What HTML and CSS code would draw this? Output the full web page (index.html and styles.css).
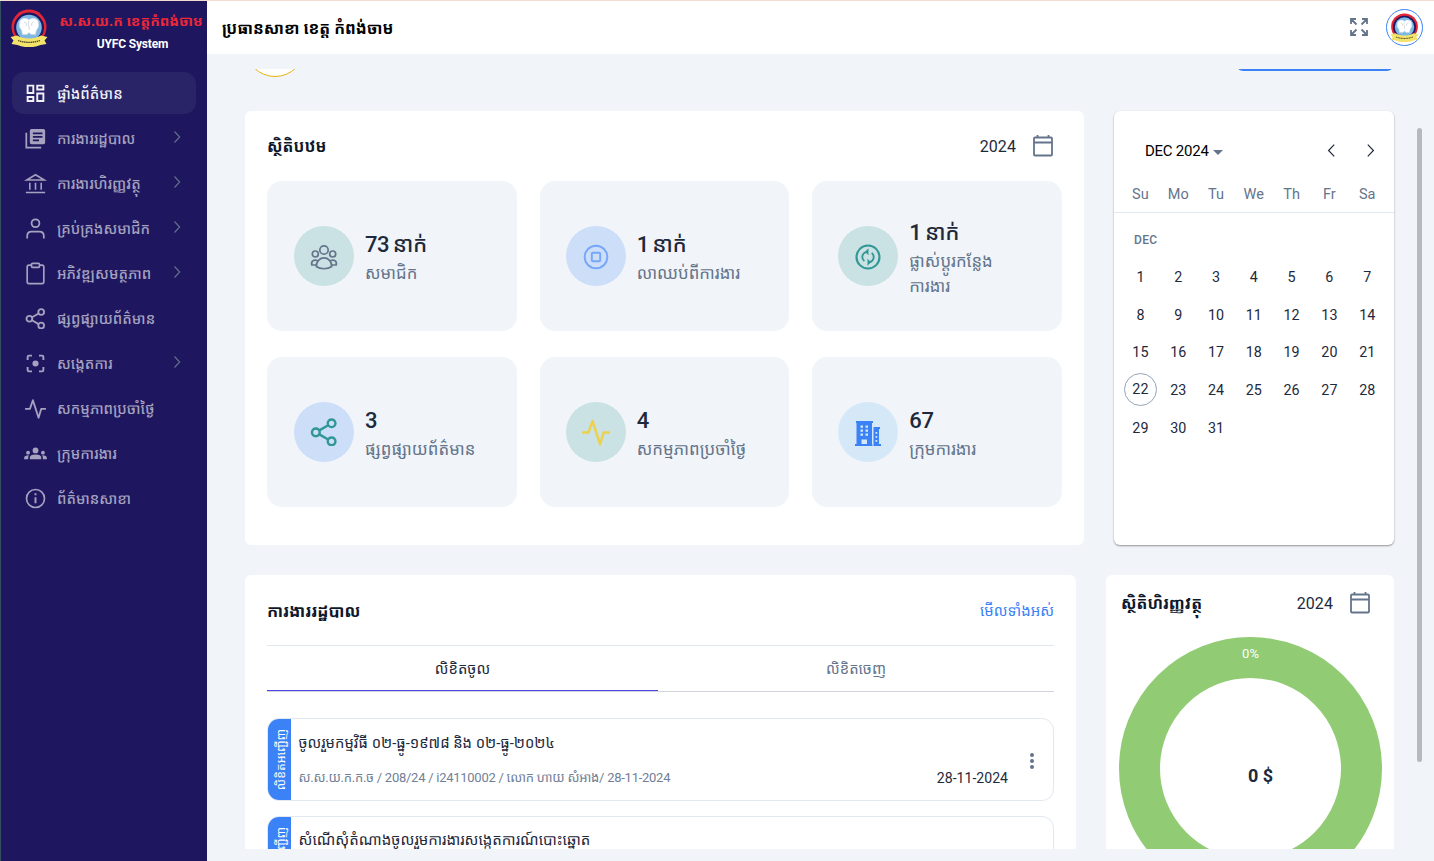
FILE: index.html
```html
<!DOCTYPE html>
<html lang="km">
<head>
<meta charset="utf-8">
<title>UYFC System</title>
<link rel="stylesheet" href="styles.css">
</head>
<body>
<svg class="defs" width="0" height="0">
  <symbol id="emblem" viewBox="0 0 38 38">
    <circle cx="19" cy="18" r="17.500" fill="#e32636"/>
    <circle cx="19" cy="18.500" r="15" fill="#1d1660"/>
    <circle cx="19" cy="18.500" r="12.800" fill="#7db9e4"/>
    <path d="M9.500 14c0-5 7-6 9.500-3 2.500-3 9.500-2 9.500 3 .5 3 0 5-2 7l-1 4.500h-4.500l-2-2-2 2h-4.500l-1-4.500c-2-2-2.500-4-2-7z" fill="#fff" stroke="#cfd6dc" stroke-width=".6"/>
    <path d="M19 12c-2 3 1 5 0 9M14 13c2 0 3 2 2 4M24 13c-2 0-3 2-2 4" fill="none" stroke="#b4bcc4" stroke-width=".6"/>
    <path d="M.500 28l6.500-1.500c7 4 17 4 24 0l6.500 1.500-3 3.500 2 3.500-6 1c-7 3-16 3-23 0l-6-1 2-3.500z" fill="#f3e36b"/>
    <path d="M8 31.500c7 2.500 15 2.500 22 0" fill="none" stroke="#4b4422" stroke-width="1.300" stroke-dasharray="1.500 .6"/>
  </symbol>
  <symbol id="share" viewBox="0 0 24 24"><g fill="none" stroke="currentColor" stroke-width="2.100"><circle cx="18.500" cy="4.500" r="3.300"/><circle cx="5" cy="12.300" r="3.300"/><circle cx="18.500" cy="20" r="3.300"/><path d="M8 10.600l7.600-4.400M8 14l7.600 4.400"/></g></symbol>
  <symbol id="pulse" viewBox="0 0 24 24"><path d="M.800 12.500h4.800L9 2.500l6.500 20 3-10h4.700" fill="none" stroke="currentColor" stroke-width="2.100" stroke-linejoin="round" stroke-linecap="round"/></symbol>
  <symbol id="chev" viewBox="0 0 8 12"><path d="M1.500 .500l5.200 5.500-5.200 5.500" fill="none" stroke="currentColor" stroke-width="1.100"/></symbol>
  <symbol id="cal" viewBox="0 0 20 22"><path d="M2 2.500h16q1 0 1 1v16q0 1-1 1H2q-1 0-1-1v-16q0-1 1-1zM1 7.500h18M4.500 0v2.500M15.500 0v2.500" fill="none" stroke="currentColor" stroke-width="1.800"/></symbol>
</svg>
<div class="app">
  <aside class="sidebar">
    <div class="brand">
      <svg class="brand-logo"><use href="#emblem"/></svg>
      <div class="brand-text"><span class="brand-name">ស.ស.យ.ក ខេត្តកំពង់ចាម</span><span class="brand-sub">UYFC System</span></div>
    </div>
    <nav class="nav">
      <a class="nav-item active"><svg class="nav-icon" viewBox="0 0 24 24"><path d="M3 3h6.500v8.500H3zM14 3h7v4.500h-7zM14 12h7v8.500h-7zM3 16h6.500v4.500H3z" fill="none" stroke="currentColor" stroke-width="2.200"/></svg><span>ផ្ទាំងព័ត៌មាន</span></a>
      <a class="nav-item"><svg class="nav-icon" viewBox="0 0 24 24"><path d="M1.500 5.500v17h17" fill="none" stroke="currentColor" stroke-width="2"/><path fill-rule="evenodd" d="M7.500 1h13.500q2 0 2 2v13.500q0 2-2 2H7.500q-2 0-2-2V3q0-2 2-2zM9 5v2h11V5zM9 9v2h11V9zM9 13v2h7v-2z" fill="currentColor"/></svg><span>ការងាររដ្ឋបាល</span><svg class="chev"><use href="#chev"/></svg></a>
      <a class="nav-item"><svg class="nav-icon" viewBox="0 0 24 24"><path d="M2 8L12 2l10 6zM5.500 11v8M12 11v8M18.500 11v8M1 22.200h22" fill="none" stroke="currentColor" stroke-width="1.800"/></svg><span>ការងារហិរញ្ញវត្ថុ</span><svg class="chev"><use href="#chev"/></svg></a>
      <a class="nav-item"><svg class="nav-icon" viewBox="0 0 24 24"><circle cx="12" cy="6" r="4.500" fill="none" stroke="currentColor" stroke-width="2"/><path d="M2.500 23.500v-3q0-5 5-5h9q5 0 5 5v3" fill="none" stroke="currentColor" stroke-width="2"/></svg><span>គ្រប់គ្រងសមាជិក</span><svg class="chev"><use href="#chev"/></svg></a>
      <a class="nav-item"><svg class="nav-icon" viewBox="0 0 24 24"><path d="M7.500 2.500H4.500q-2 0-2 2v17q0 2 2 2h15q2 0 2-2v-17q0-2-2-2h-3M8.500 .500h7q1 0 1 1v2.500q0 1-1 1h-7q-1 0-1-1V1.500q0-1 1-1z" fill="none" stroke="currentColor" stroke-width="1.900"/></svg><span>អភិវឌ្ឍសមត្ថភាព</span><svg class="chev"><use href="#chev"/></svg></a>
      <a class="nav-item"><svg class="nav-icon"><use href="#share"/></svg><span>ផ្សព្វផ្សាយព័ត៌មាន</span></a>
      <a class="nav-item"><svg class="nav-icon" viewBox="0 0 24 24"><path d="M3 8V4.500Q3 3 4.500 3H8M16 3h3.500Q21 3 21 4.500V8M21 16v3.500q0 1.500-1.500 1.500H16M8 21H4.500Q3 21 3 19.500V16" fill="none" stroke="currentColor" stroke-width="2.200"/><circle cx="12" cy="12" r="3.500" fill="currentColor"/></svg><span>សង្កេតការ</span><svg class="chev"><use href="#chev"/></svg></a>
      <a class="nav-item"><svg class="nav-icon"><use href="#pulse"/></svg><span>សកម្មភាពប្រចាំថ្ងៃ</span></a>
      <a class="nav-item"><svg class="nav-icon" viewBox="0 0 24 24"><g fill="currentColor"><circle cx="12" cy="8.500" r="3.300"/><circle cx="3.500" cy="11" r="2.200"/><circle cx="20.500" cy="11" r="2.200"/><path d="M5.500 18.500v-2q0-3.500 6.500-3.500t6.500 3.500v2zM-1 18.500v-1.500q0-3 5.500-3-1 1-1 4.500zM25 18.500v-1.500q0-3-5.500-3 1 1 1 4.500z"/></g></svg><span>ក្រុមការងារ</span></a>
      <a class="nav-item"><svg class="nav-icon" viewBox="0 0 24 24"><circle cx="12" cy="12" r="10.300" fill="none" stroke="currentColor" stroke-width="1.900"/><path d="M12 10.500v7M12 6v2.200" stroke="currentColor" stroke-width="2.200"/></svg><span>ព័ត៌មានសាខា</span></a>
    </nav>
  </aside>
  <main class="main">
    <header class="topbar">
      <h1>ប្រធានសាខា ខេត្ត កំពង់ចាម</h1>
      <svg class="expand" viewBox="0 0 18 18"><path d="M1 6V1h5M12 1h5v5M17 12v5h-5M6 17H1v-5M1 1l5.500 5.500M17 1l-5.500 5.500M17 17l-5.500-5.500M1 17l5.500-5.500" fill="none" stroke="currentColor" stroke-width="1.800"/></svg>
      <div class="avatar"><svg viewBox="0 0 38 38"><use href="#emblem"/></svg></div>
    </header>
    <div class="viewport">
      <div class="content">
        <div class="lead"><span class="lead-pic"></span><span class="lead-btn"></span></div>
        <div class="row">
          <section class="card stats">
            <div class="card-head"><h2>ស្ថិតិបឋម</h2><span class="year">2024</span><svg class="cal"><use href="#cal"/></svg></div>
            <div class="stat-grid">
              <div class="stat"><i class="disc teal slate"><svg viewBox="0 0 28 28"><g fill="none" stroke="currentColor" stroke-width="1.700"><circle cx="14" cy="8" r="4.200"/><circle cx="5.300" cy="12" r="3"/><circle cx="22.700" cy="12" r="3"/><path d="M6.300 24.500c0-11.500 15.400-11.500 15.400 0-4 3-11.400 3-15.400 0zM6.300 23H1.800c-1-4.500 3-6 6-4M21.700 23h4.500c1-4.500-3-6-6-4"/></g></svg></i><div><b>73 នាក់</b><p>សមាជិក</p></div></div>
              <div class="stat"><i class="disc blue sky"><svg viewBox="0 0 28 28"><g fill="none" stroke="currentColor" stroke-width="1.900"><circle cx="14" cy="15" r="11.300"/><rect x="9.800" y="10.800" width="8.400" height="8.400" rx="1"/></g></svg></i><div><b>1 នាក់</b><p>លាឈប់ពីការងារ</p></div></div>
              <div class="stat"><i class="disc teal green"><svg viewBox="0 0 28 28"><g fill="none" stroke="currentColor"><circle cx="14" cy="15" r="11.500" stroke-width="2.100"/><path d="M10.300 19.200C6.500 15.500 8.500 9.800 14 9.800M17.700 10.800c3.800 3.700 1.800 9.400-3.700 9.400" stroke-width="1.800"/></g><path d="M14.500 6.300v7l-3.500-3.500zM13.500 16.700v7l3.500-3.500z" fill="currentColor"/></svg></i><div><b>1 នាក់</b><p>ផ្លាស់ប្តូរកន្លែង<br>ការងារ</p></div></div>
              <div class="stat"><i class="disc blue green"><svg><use href="#share"/></svg></i><div><b>3</b><p>ផ្សព្វផ្សាយព័ត៌មាន</p></div></div>
              <div class="stat"><i class="disc teal yellow"><svg><use href="#pulse"/></svg></i><div><b>4</b><p>សកម្មភាពប្រចាំថ្ងៃ</p></div></div>
              <div class="stat"><i class="disc light royal"><svg viewBox="0 0 28 28"><path fill-rule="evenodd" fill="currentColor" d="M2 3h17v2h-1v21.500h.5v1.500H1v-2h1.500V5H2zM6.500 7.500v2.300h2.500V7.500zM11.500 7.500v2.300H14V7.500zM6.500 11.500v2.300h2.500v-2.300zM11.500 11.500v2.300H14v-2.300zM6.500 15.500v2.300h2.500v-2.300zM11.500 15.500v2.300H14v-2.300zM7.500 21.500V26h5.500v-4.500zM19.500 9h6.500v2h-1v15h2v2h-7.500zM21.500 14v1.800h1.800V14zM21.500 18v1.800h1.800V18zM21.500 22v1.800h1.800V22z"/></svg></i><div><b>67</b><p>ក្រុមការងារ</p></div></div>
            </div>
          </section>
          <section class="card calendar">
            <div class="cal-head"><span class="period">DEC 2024</span><i class="caret"></i><svg class="step prev"><use href="#chev"/></svg><svg class="step"><use href="#chev"/></svg></div>
            <div class="week names"><span>Su</span><span>Mo</span><span>Tu</span><span>We</span><span>Th</span><span>Fr</span><span>Sa</span></div>
            <div class="month">DEC</div>
            <div class="week days"><span>1</span><span>2</span><span>3</span><span>4</span><span>5</span><span>6</span><span>7</span><span>8</span><span>9</span><span>10</span><span>11</span><span>12</span><span>13</span><span>14</span><span>15</span><span>16</span><span>17</span><span>18</span><span>19</span><span>20</span><span>21</span><span class="today">22</span><span>23</span><span>24</span><span>25</span><span>26</span><span>27</span><span>28</span><span>29</span><span>30</span><span>31</span></div>
          </section>
        </div>
        <div class="row second">
          <section class="card letters">
            <div class="card-head"><h2>ការងាររដ្ឋបាល</h2><a class="all">មើលទាំងអស់</a></div>
            <div class="tabs"><span class="tab on">លិខិតចូល</span><span class="tab">លិខិតចេញ</span></div>
            <article class="letter"><span class="tag"><em>លិខិតអញ្ជើញ</em></span><div class="letter-body"><h3>ចូលរួមកម្មវិធី ០២-ធ្នូ-១៩៧៨ និង ០២-ធ្នូ-២០២៤</h3><p>ស.ស.យ.ក.ក.ច / 208/24 / i24110002 / លោក ហាយ សំអាង/ 28-11-2024</p></div><time>28-11-2024</time><span class="dots"><i></i><i></i><i></i></span></article>
            <article class="letter"><span class="tag"><em>លិខិតអញ្ជើញ</em></span><div class="letter-body"><h3 class="wide">សំណើសុំតំណាងចូលរួមការងារសង្កេតការណ៍បោះឆ្នោត</h3></div></article>
          </section>
          <section class="card finance">
            <div class="card-head"><h2>ស្ថិតិហិរញ្ញវត្ថុ</h2><span class="year">2024</span><svg class="cal"><use href="#cal"/></svg></div>
            <div class="donut"><span class="pct">0%</span><b>0 $</b></div>
          </section>
        </div>
      </div>
    </div>
    <i class="scrollbar"></i>
  </main>
</div>
</body>
</html>
```
FILE: styles.css
```css
* { box-sizing: border-box; }
body { margin: 0; font-family: "Roboto", "Noto Sans Khmer", sans-serif; color: #1e293b; background: #f1f4f9; }
h1, h2, h3, p { margin: 0; }
.defs { position: absolute; }
.app { display: flex; width: 1434px; height: 861px; overflow: hidden; border-top: 1px solid #f3ddd2; white-space: nowrap; }
.sidebar { width: 207px; flex: none; background: #1e1760; border-left: 1px solid #31505f; }
.brand { display: flex; height: 71px; padding: 8px 0 0 9px; }
.brand-logo { width: 38px; height: 38px; flex: none; }
.brand-text { display: flex; flex-direction: column; width: 146px; margin-left: 10px; align-items: center; font-weight: 700; }
.brand-name { font-size: 14.200px; line-height: 24px; color: #ee2737; }
.brand-sub { padding-left: 3px; font-size: 12px; line-height: 22px; letter-spacing: -.15px; color: #fff; }
.nav { display: flex; flex-direction: column; gap: 3px; padding-left: 11px; }
.nav-item { display: flex; align-items: center; width: 184px; height: 42px; padding-left: 13px; border-radius: 12px; color: #a5a2bf; font-size: 14.700px; font-weight: 500; }
.nav-item.active { background: #292367; color: #f1f1f7; }
.nav-icon { width: 21px; height: 21px; margin-right: 11px; overflow: visible; }
.chev { width: 8px; height: 12px; margin: -3px 15px 0 auto; color: #64748b; }
.main { position: relative; flex: 1; min-width: 0; }
.topbar { display: flex; align-items: center; height: 53px; padding: 0 11px 0 15px; background: #fff; }
.topbar h1 { flex: 1; font-size: 16px; font-weight: 700; color: #000; }
.expand { width: 18px; height: 18px; margin: -2px 18px 0 0; color: #64748b; }
.avatar { display: flex; align-items: center; justify-content: center; width: 37px; height: 37px; border: 1px solid #3b82f6; border-radius: 50%; }
.avatar svg { width: 29px; height: 29px; }
.viewport { height: 780px; margin: 15px 11px 0 15px; overflow: hidden; }
.content { margin-top: -52px; padding: 0 29px 0 23px; }
.lead { display: flex; justify-content: space-between; align-items: center; height: 60px; }
.lead-pic { width: 60px; height: 60px; border: 1px solid #eab308; border-radius: 50%; background: #fff; }
.lead-btn { width: 156px; height: 48px; margin-right: 1px; border-radius: 6px; background: #3b82f6; }
.row { display: flex; gap: 30px; margin-top: 34px; }
.second { margin-top: 30px; }
.card { border-radius: 6px; background: #fff; }
.card-head { display: flex; align-items: center; height: 70px; }
.card-head h2 { margin-right: auto; font-size: 16px; font-weight: 700; color: #0f172a; }
.year { font-size: 16px; color: #1e293b; letter-spacing: .1px; }
.cal { width: 20px; height: 22px; margin-left: 17px; color: #64748b; }
.stats { width: 839px; height: 434px; padding: 0 22px; }
.stats .card-head { padding-right: 9px; }
.stat-grid { display: grid; grid-template-columns: repeat(3, 1fr); grid-auto-rows: 150px; gap: 26px 23px; }
.stat { display: flex; align-items: center; padding-left: 26px; border-radius: 15px; background: #f1f4f9; }
.stat:nth-child(3n + 1) { padding-left: 27px; }
.disc { display: flex; align-items: center; justify-content: center; flex: none; width: 60px; height: 60px; margin-right: 11px; border-radius: 50%; }
.disc svg { width: 28px; height: 28px; }
.teal { background: #cae2e4; } .blue { background: #cddef9; } .light { background: #d5e8f8; }
.slate { color: #64748b; } .sky { color: #76a7f8; } .green { color: #319795; } .yellow { color: #ecd14d; } .royal { color: #3b82f6; }
.stat b { display: block; padding-top: 4px; font-size: 22px; line-height: 30px; font-weight: 500; letter-spacing: -.4px; word-spacing: -1.500px; color: #1e293b; }
.stat p { padding-top: 1px; font-size: 16.800px; line-height: 25px; color: #64748b; }
.calendar { width: 280px; height: 434px; box-shadow: 0 1px 2px rgba(0,0,0,.4); }
.cal-head { display: flex; align-items: center; height: 79px; padding: 0 19px 0 31px; }
.period { font-size: 15px; letter-spacing: -.25px; color: #000; }
.caret { margin: 3px auto 0 4px; border: 5px solid transparent; border-top-color: #64748b; border-bottom: 0; }
.step { width: 9px; height: 13px; color: #1e293b; }
.prev { margin-right: 30px; transform: scaleX(-1); }
.week { display: grid; grid-template-columns: repeat(7, 37.800px); padding: 0 7.500px; justify-items: center; text-align: center; }
.names { height: 23px; border-bottom: 1px solid #e2e8f0; line-height: 10px; font-size: 14.500px; color: #64748b; }
.month { height: 45px; padding: 20px 0 0 20px; font-size: 12px; line-height: 14px; font-weight: 500; letter-spacing: .3px; color: #64748b; }
.days { grid-auto-rows: 37.700px; align-items: center; font-size: 14.300px; }
.today { width: 33px; height: 33px; line-height: 31px; border: 1px solid #94a3b8; border-radius: 50%; }
.letters { width: 831px; height: 500px; padding: 0 22px; }
.letters h2 { font-size: 16.500px; }
.all { font-size: 14.900px; color: #3b82f6; }
.tabs { display: grid; grid-template-columns: 391px 1fr; height: 47px; border-top: 1px solid #e2e8f0; border-bottom: 1px solid #d1d5db; }
.tab { padding-top: 12px; font-size: 14.800px; line-height: 22px; text-align: center; color: #64748b; }
.on { border-bottom: 1px solid #4f46e5; color: #1e293b; }
.letter { display: flex; height: 83px; margin-top: 26px; border: 1px solid #e2e8f0; border-radius: 12px; overflow: hidden; }
.letter + .letter { margin-top: 15px; }
.tag { display: flex; align-items: center; justify-content: center; flex: none; width: 23px; background: #3b82f6; color: #fff; }
.tag em { font-size: 12.200px; font-style: normal; transform: translateX(1px) rotate(-90deg); }
.letter-body { flex: 1; padding: 12px 0 0 7.500px; }
.letter h3 { font-size: 14.800px; line-height: 24px; font-weight: 400; }
.letter .wide { font-size: 15px; line-height: 23px; }
.letter p { margin-top: 10px; font-size: 13px; line-height: 25px; letter-spacing: -.26px; color: #718096; }
.letter time { align-self: flex-end; margin-bottom: 12px; font-size: 14.100px; line-height: 20px; }
.dots { display: flex; flex-direction: column; gap: 2px; margin: 34px 19px 0 22px; }
.dots i { width: 4px; height: 4px; border-radius: 50%; background: #64748b; }
.finance { width: 288px; height: 500px; }
.finance .card-head { height: 56px; padding: 0 24px 0 15px; }
.donut { position: relative; width: 263px; height: 263px; margin: 6px 0 0 13px; border: 41px solid #91cc75; border-radius: 50%; }
.donut .pct { position: absolute; top: -32px; left: 0; right: 0; text-align: center; font-size: 13px; color: #fff; }
.donut b { position: absolute; top: 87px; left: 88px; font-size: 18px; }
.scrollbar { position: absolute; right: 12px; top: 127px; width: 5px; height: 634px; border-radius: 3px; background: #b5babe; }
```
